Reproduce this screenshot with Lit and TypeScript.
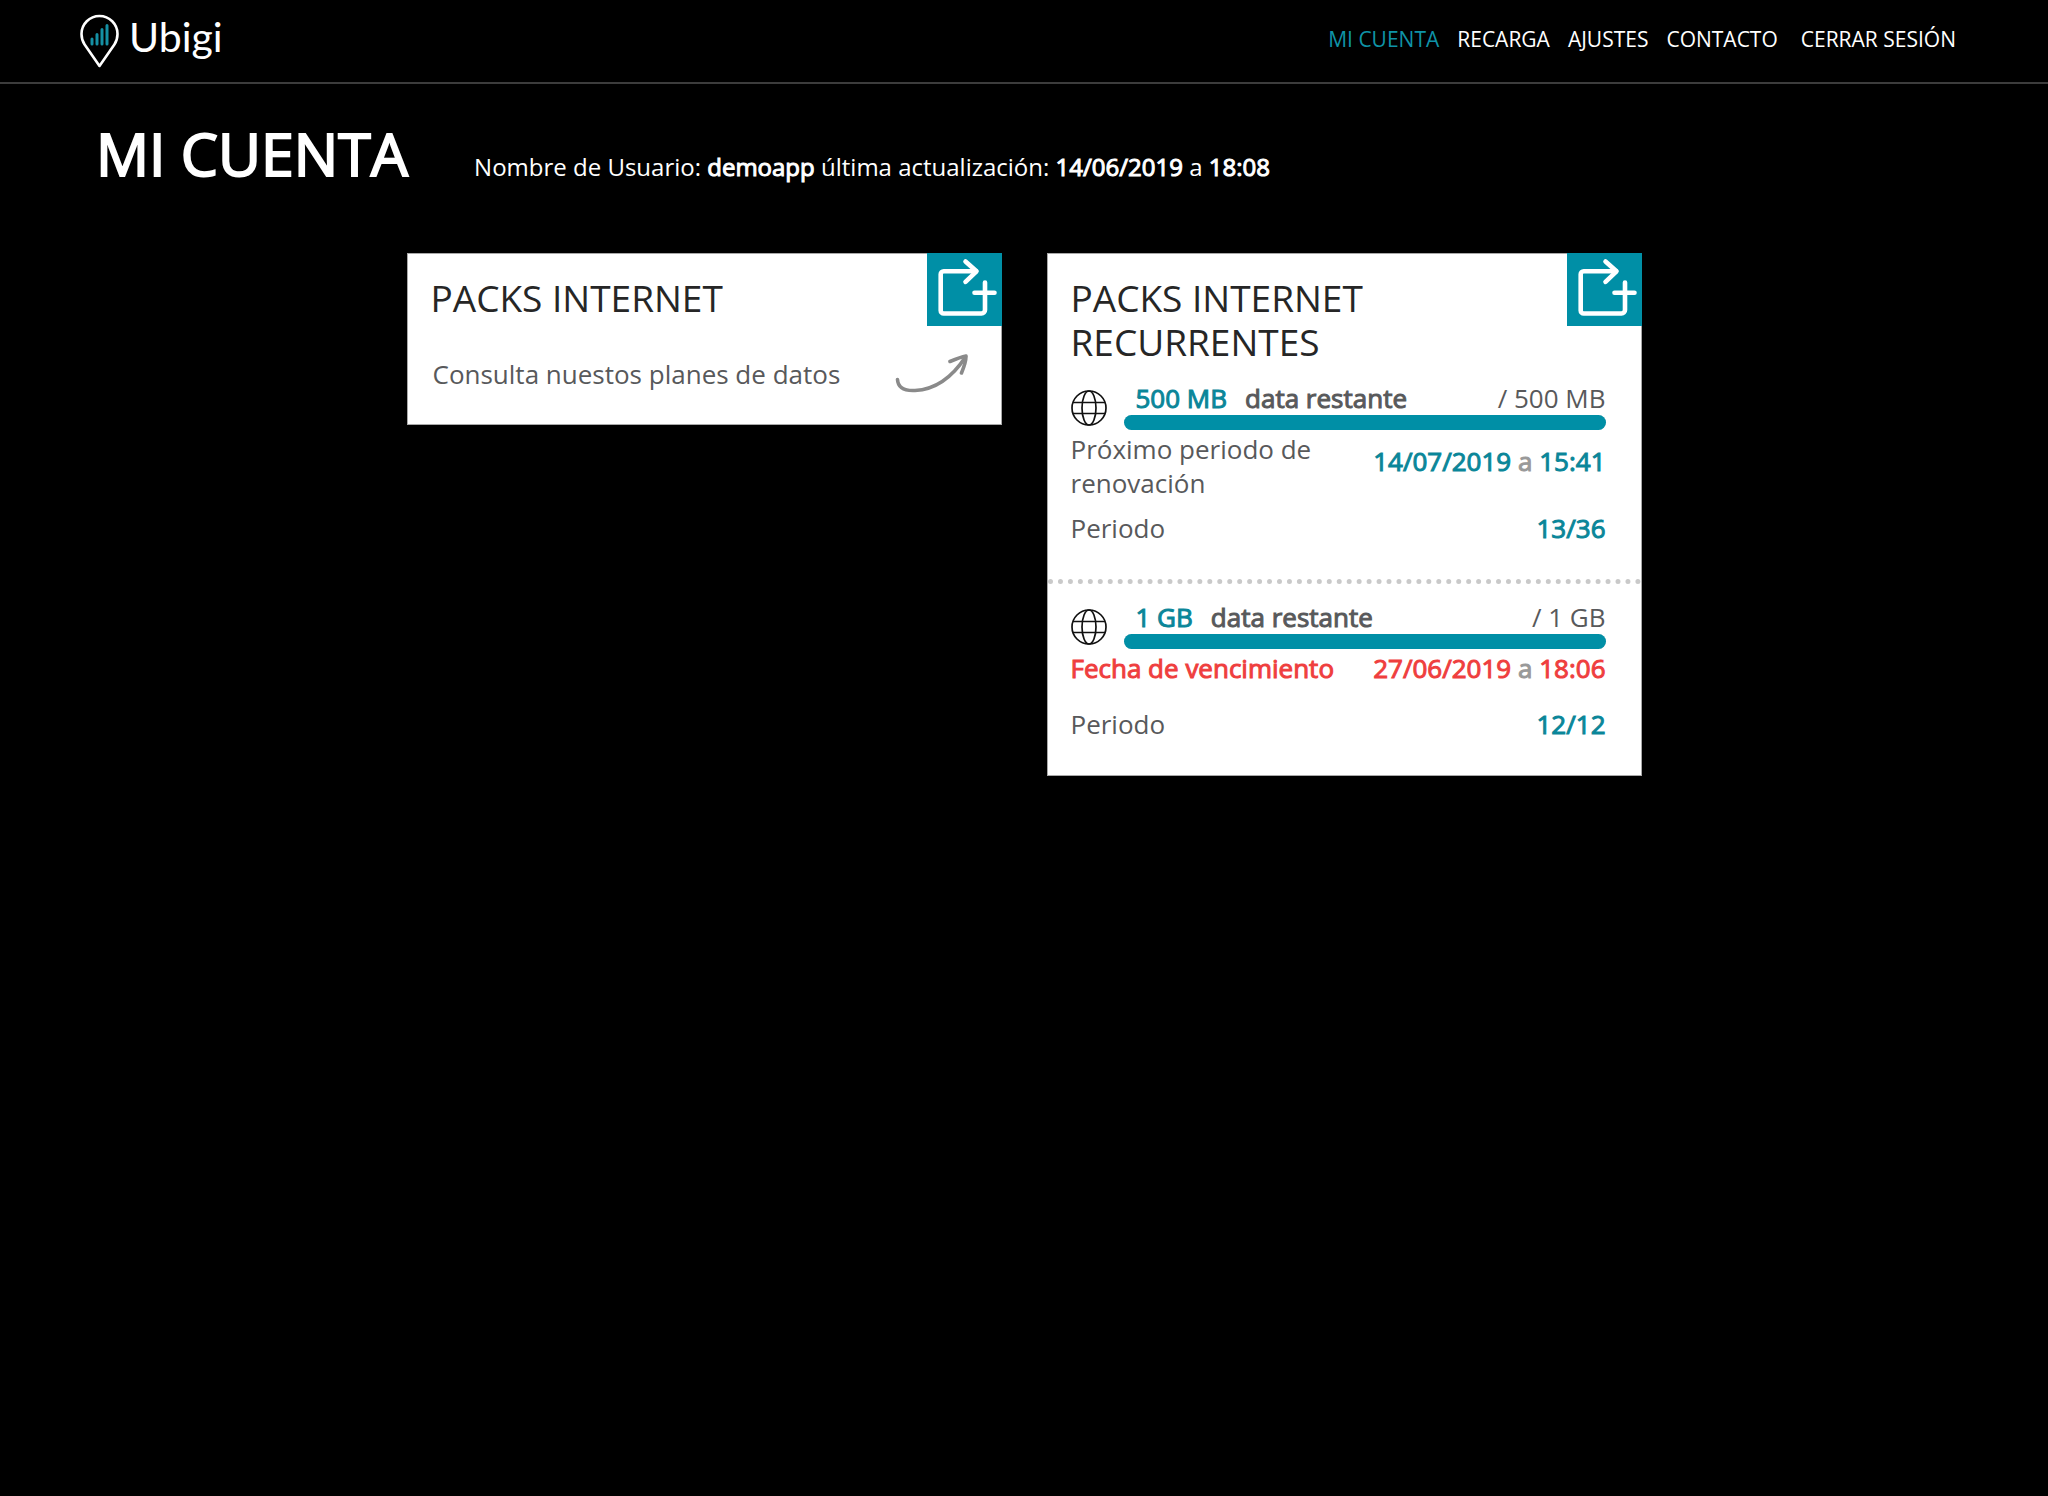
import { LitElement, html, css, nothing } from "lit";
import { customElement, property } from "lit/decorators.js";
import { classMap } from "lit/directives/class-map.js";
import { styleMap } from "lit/directives/style-map.js";

interface Plan {
  remaining: string;
  total: string;
  percent: number;
  dateLabel: string;
  date: string;
  time: string;
  period: string;
  expiring: boolean;
}

const plans: Plan[] = [
  {
    remaining: "500 MB",
    total: "500 MB",
    percent: 100,
    dateLabel: "Próximo periodo de renovación",
    date: "14/07/2019",
    time: "15:41",
    period: "13/36",
    expiring: false,
  },
  {
    remaining: "1 GB",
    total: "1 GB",
    percent: 100,
    dateLabel: "Fecha de vencimiento",
    date: "27/06/2019",
    time: "18:06",
    period: "12/12",
    expiring: true,
  },
];

const navItems = ["MI CUENTA", "RECARGA", "AJUSTES", "CONTACTO", "CERRAR SESIÓN"];

@customElement("site-header")
class SiteHeader extends LitElement {
  static styles = css`
    :host {
      display: block;
    }
    .bar {
      display: flex;
      align-items: center;
      justify-content: space-between;
      height: 82px;
      padding: 0 92px 0 80px;
      border-bottom: 2px solid #3c3c3c;
    }
    .logo {
      display: flex;
      align-items: center;
      gap: 9px;
      color: #fff;
      text-decoration: none;
    }
    .name {
      font: 400 41px/48px Lato, sans-serif;
      padding-bottom: 8px;
    }
    .nav {
      display: flex;
      gap: 18px;
      padding-bottom: 4px;
    }
    .link {
      color: #fff;
      font-size: 21px;
      line-height: 30px;
      text-decoration: none;
    }
    .link.active {
      color: #0f93a7;
    }
    .link:last-child {
      margin-left: 5px;
    }
  `;

  render() {
    return html`
      <header class="bar">
        <a class="logo" href="#">
          <svg width="40" height="54" viewBox="0 0 40 54" fill="none" aria-hidden="true">
            <path
              d="M19.5 52 4.6 30.5C2.6 27.5 1.5 24 1.5 20a18 18 0 0 1 36 0c0 4-1.1 7.500-3.100 10.500Z"
              stroke="#fff"
              stroke-width="2.6"
              stroke-linejoin="round"
            />
            <path
              d="M12 25v5M17 20.5v9.500M22 15.500v14.500M27 11.500v18.500"
              stroke="#1590a4"
              stroke-width="3"
              stroke-linecap="round"
            />
          </svg>
          <span class="name">Ubigi</span>
        </a>
        <nav class="nav">
          ${navItems.map(
            (item, i) =>
              html`<a class=${classMap({ link: true, active: i === 0 })} href="#">${item}</a>`
          )}
        </nav>
      </header>
    `;
  }
}

@customElement("pack-card")
class PackCard extends LitElement {
  @property() heading = "";

  static styles = css`
    :host {
      display: block;
    }
    .card {
      background: #fff;
      border: 1px solid #a8a8a8;
      padding-bottom: 30px;
    }
    .head {
      display: flex;
      align-items: flex-start;
      justify-content: space-between;
    }
    .title {
      margin: 0;
      padding: 22px 0 0 23px;
      color: #262626;
      font-size: 37px;
      font-weight: 400;
      line-height: 44px;
    }
    .add {
      display: block;
      flex: none;
      width: 75px;
      height: 73px;
      margin: -1px -1px 0 0;
      padding: 0;
      border: 0;
      background: #008fa6;
      cursor: pointer;
    }
    .add svg {
      display: block;
    }
  `;

  render() {
    return html`
      <section class="card">
        <div class="head">
          <h2 class="title">${this.heading}</h2>
          <button class="add" type="button" aria-label="Añadir pack">
            <svg width="75" height="73" viewBox="0 0 75 73" fill="none" stroke="#fff" stroke-width="4.6" stroke-linecap="round" stroke-linejoin="round" aria-hidden="true">
              <path d="M49 18.3H16.7a3 3 0 0 0-3 3V57.500a3 3 0 0 0 3 3H54.500a3.500 3.500 0 0 0 3.500-3.500V29.500" />
              <path d="M38.5 8.500 49.500 18.300 38.500 28.800M47.500 39.700H67.500" />
            </svg>
          </button>
        </div>
        <slot></slot>
      </section>
    `;
  }
}

@customElement("plan-usage")
class PlanUsage extends LitElement {
  @property({ attribute: false }) plan!: Plan;

  static styles = css`
    :host {
      display: block;
      padding: 0 35px 4px 23px;
      color: #58595b;
      font-size: 26px;
      line-height: 34px;
    }
    .usage {
      display: flex;
      align-items: center;
      gap: 17px;
    }
    .globe {
      flex: none;
      padding-top: 4px;
    }
    .meter {
      flex: 1;
    }
    .labels {
      display: flex;
      gap: 18px;
      padding-left: 12px;
      line-height: 33px;
    }
    .total {
      margin-left: auto;
    }
    .track {
      height: 15px;
      border-radius: 8px;
      background: #d8d8d8;
    }
    .fill {
      height: 100%;
      border-radius: 8px;
      background: #008fa6;
    }
    .strong {
      font-weight: 400;
      -webkit-text-stroke: 1px currentColor;
    }
    .teal {
      color: #0a8699;
    }
    .and {
      color: #999;
    }
    .row {
      display: flex;
      justify-content: space-between;
    }
    .dates {
      min-height: 45px;
      margin: 2px 0 11px;
    }
    .label {
      max-width: 270px;
    }
    .renewal {
      padding-top: 12px;
    }
    .expiring {
      color: #ef3e3e;
    }
  `;

  render() {
    const p = this.plan;
    const tone = { strong: true, teal: !p.expiring, expiring: p.expiring };
    return html`
      <div class="usage">
        <svg class="globe" width="36" height="36" viewBox="0 0 36 36" fill="none" stroke="#111" stroke-width="1.7" aria-hidden="true">
          <circle cx="18" cy="18" r="17" />
          <ellipse cx="18" cy="18" rx="7" ry="17" />
          <path d="M2 12.5H34M2 23.5H34" />
        </svg>
        <div class="meter">
          <div class="labels">
            <span class="strong teal">${p.remaining}</span>
            <span class="strong">data restante</span>
            <span class="total">/ ${p.total}</span>
          </div>
          <div class="track" role="progressbar" aria-label="data restante" aria-valuenow=${p.percent} aria-valuemin="0" aria-valuemax="100">
            <div class="fill" style=${styleMap({ width: `${p.percent}%` })}></div>
          </div>
        </div>
      </div>
      <div class="row dates">
        <span class=${classMap({ label: true, strong: p.expiring, expiring: p.expiring })}>${p.dateLabel}</span>
        <span class=${classMap({ ...tone, renewal: !p.expiring })}>${p.date} <span class="and">a</span> ${p.time}</span>
      </div>
      <div class="row">
        <span>Periodo</span>
        <span class="strong teal">${p.period}</span>
      </div>
    `;
  }
}

@customElement("app-root")
class AppRoot extends LitElement {
  static styles = css`
    :host {
      display: block;
      min-height: 100vh;
      background: #000;
      color: #fff;
      font-family: "Open Sans", "Noto Sans", sans-serif;
    }
    .intro {
      display: flex;
      flex-wrap: wrap;
      align-items: baseline;
      gap: 0 66px;
      padding: 35px 96px 66px;
    }
    .title {
      margin: 0;
      font-size: 59px;
      font-weight: 400;
      line-height: 68px;
      -webkit-text-stroke: 2px currentColor;
    }
    .account {
      margin: 0;
      font-size: 24px;
      line-height: 34px;
    }
    .strong {
      font-weight: 400;
      -webkit-text-stroke: 1px currentColor;
    }
    .cards {
      display: grid;
      grid-template-columns: repeat(2, minmax(0, 595px));
      align-items: start;
      justify-content: center;
      gap: 45px;
    }
    .offer {
      display: flex;
      align-items: center;
      justify-content: space-between;
      margin-top: 28px;
      padding: 0 30px 0 25px;
      color: #58595b;
      font-size: 26px;
      line-height: 34px;
      text-decoration: none;
    }
    .plan {
      margin-top: 18px;
    }
    .dots {
      margin: 30px 0 17px;
      border: 0;
      border-top: 5px dotted #c9c9c9;
    }
    .dots + .plan {
      margin-top: 0;
    }
  `;

  render() {
    return html`
      <site-header></site-header>
      <main>
        <div class="intro">
          <h1 class="title">MI CUENTA</h1>
          <p class="account">
            Nombre de Usuario: <b class="strong">demoapp</b> última actualización:
            <b class="strong">14/06/2019</b> a <b class="strong">18:08</b>
          </p>
        </div>
        <div class="cards">
          <pack-card heading="PACKS INTERNET">
            <a class="offer" href="#">
              Consulta nuestos planes de datos
              <svg width="76" height="40" viewBox="0 0 76 40" fill="none" stroke="#8a8a8a" stroke-width="3.6" stroke-linecap="round" stroke-linejoin="round" aria-hidden="true">
                <path d="M2.5 25.500C3 34 10 37 20 36.500 42 35.500 58 22 70.500 3" />
                <path d="M55 7.500C61 5 66 3 71 2 71 8 69 13 66.500 19" />
              </svg>
            </a>
          </pack-card>
          <pack-card heading="PACKS INTERNET RECURRENTES">
            ${plans.map(
              (plan, i) => html`
                ${i > 0 ? html`<hr class="dots" />` : nothing}
                <plan-usage class="plan" .plan=${plan}></plan-usage>
              `
            )}
          </pack-card>
        </div>
      </main>
    `;
  }
}
